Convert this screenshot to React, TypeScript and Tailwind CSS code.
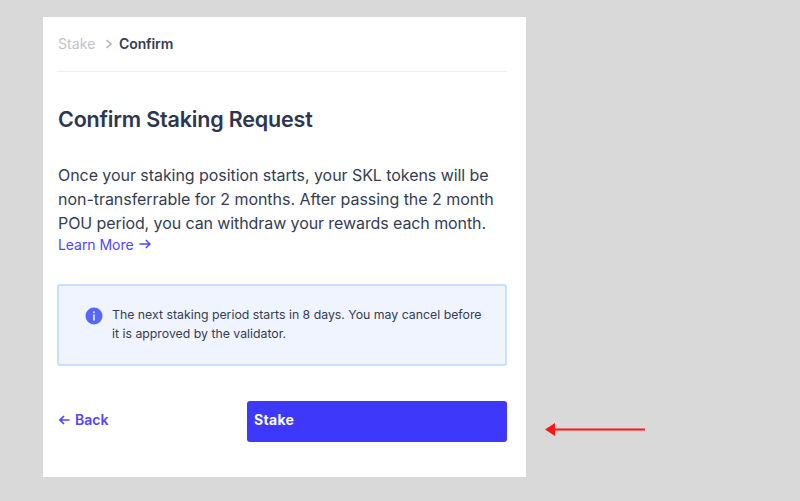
export default function App() {
  return (
    <div className="flex h-[501px] w-[800px] items-start overflow-hidden bg-[#d9d9d9] pl-[43px] pt-[17px] font-['Inter',sans-serif] text-[#343d52]">
      {/* Card */}
      <main className="h-[460px] w-[483px] shrink-0 bg-white pl-[14px] pr-[19px]">
        <nav className="flex h-[55px] items-center border-b border-[#f0f0f1] pb-0.5 pl-px text-[14px]">
          <span className="w-[47px] tracking-[0.1px] text-[#c1c3cb]">Stake</span>
          <svg viewBox="0 0 8 10" className="mr-[6px] mt-px h-[10px] w-2 shrink-0" fill="none" stroke="#b3b5c0" strokeWidth="1.6">
            <path d="M1.5 1 6 5 1.5 9" />
          </svg>
          <span className="font-semibold tracking-[-0.1px]">Confirm</span>
        </nav>

        <h1 className="mt-[33px] pl-px text-[21.5px] font-semibold leading-[28px] tracking-[-0.18px] text-[#2c3650]">
          Confirm Staking Request
        </h1>

        <div className="mt-[30px] whitespace-nowrap pl-px text-[16px] leading-[24px]">
          <p className="tracking-[-0.06px]">Once your staking position starts, your SKL tokens will be</p>
          <p className="tracking-[-0.04px]">non-transferrable for 2 months. After passing the 2 month</p>
          <p className="tracking-[-0.09px]">POU period, you can withdraw your rewards each month.</p>
        </div>
        <a href="#" className="-mt-px flex h-5 items-center gap-[5px] pl-px text-[14px] tracking-[-0.05px] text-[#5145ff]">
          Learn More
          <svg viewBox="0 0 12 10" className="h-[10px] w-3" fill="none" stroke="currentColor" strokeWidth="1.5">
            <path d="M.5 5h10M6.8 1 11 5 6.8 9" />
          </svg>
        </a>

        {/* Notice */}
        <div className="mt-[30px] flex h-[82px] rounded-[3px] border-2 border-[#c8dffe] bg-[#eff4ff] pl-[26px] pt-[19px]">
          <svg viewBox="0 0 18 18" className="mt-[2px] h-[18px] w-[18px] shrink-0">
            <circle cx="9" cy="9" r="8.5" fill="#5767fb" />
            <path d="M9 7.5v6" stroke="#dbe2ff" strokeWidth="1.8" />
            <circle cx="9" cy="5.2" r="1" fill="#dbe2ff" />
          </svg>
          <p className="ml-[9px] whitespace-nowrap text-[12.3px] leading-[19px]">
            The next staking period starts in 8 days. You may cancel before
            <br />
            it is approved by the validator.
          </p>
        </div>

        <div className="mt-[35px] flex h-[41px] items-center justify-between">
          <button className="mb-1 flex items-center gap-[5px] pl-[2px] text-[14px] font-semibold text-[#5145ff]">
            <svg viewBox="0 0 11 10" className="h-[10px] w-[11px]" fill="none" stroke="currentColor" strokeWidth="1.7">
              <path d="M10.5 5h-9M5 1 1 5l4 4" />
            </svg>
            Back
          </button>
          <button className="h-[41px] w-[260px] rounded-[3px] bg-[#3e38fb] pb-1 pl-[7px] text-left text-[14px] font-bold tracking-[0.3px] text-white">
            Stake
          </button>
        </div>
      </main>

      {/* Pointer to the stake button */}
      <svg viewBox="0 0 101 14" className="ml-[19px] mt-[405px] h-[14px] w-[101px] shrink-0">
        <path d="M8 7.5h92" stroke="#fb1718" strokeWidth="2" />
        <path d="M0 7.5 10 1v13Z" fill="#fb1718" />
      </svg>
    </div>
  );
}
